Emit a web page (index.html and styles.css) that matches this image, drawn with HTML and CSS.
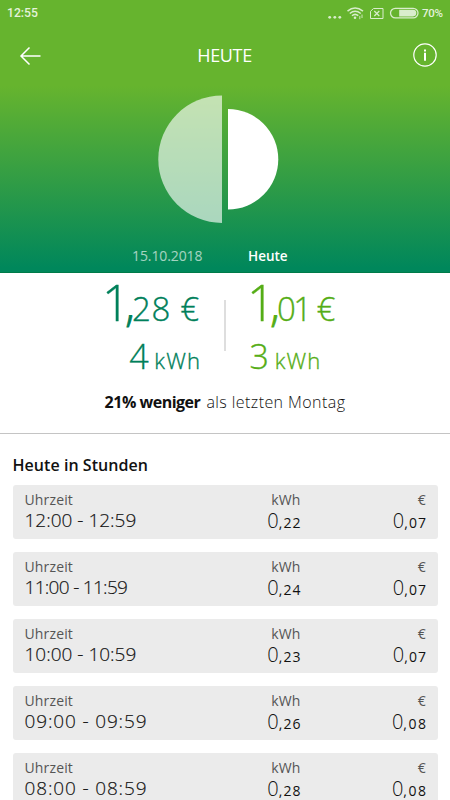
FILE: index.html
```html
<!DOCTYPE html>
<html lang="de">
<head>
<meta charset="utf-8">
<title>Heute</title>
<link rel="stylesheet" href="styles.css">
</head>
<body>
<header class="hero">
  <div class="status">
    <span>12:55</span>
    <svg class="status-icons" width="90" height="20" viewBox="0 0 90 20" fill="none" stroke="#d9edcc">
      <g fill="#d9edcc" stroke="none"><circle cx="2.7" cy="13.3" r="1.4"/><circle cx="7.8" cy="13.3" r="1.4"/><circle cx="12.8" cy="13.3" r="1.4"/><circle cx="28" cy="13.800" r="1.300"/></g>
      <path stroke-width="1.500" d="M20.500 7.200Q28 1 36 7.200M22.800 9.500Q28 5 33.800 9.500M25 11.700Q28 9 31.300 11.700"/>
      <path stroke-width=".9" d="M32.800 12v3.200M35 10.500v3.500"/>
      <path d="M46.500 4.500h9.500v10H43.500V7.300z"/><path stroke-width="1.200" d="m47.300 7 5 5m0-5-5 5"/>
      <rect x="63.500" y="4.300" width="27.500" height="9.600" rx="4.800" stroke-width="1.300"/>
      <path fill="#d9edcc" stroke="none" d="M72.200 5.800h13.800a3.300 3.300 0 0 1 0 6.600H72.200z"/>
    </svg>
    <span class="percent">70%</span>
  </div>
  <nav class="nav">
    <svg width="24" height="24" viewBox="0 0 24 24" fill="none" stroke="#fff" stroke-width="1.500"><path d="M22.500 13H3M11.500 4.500 3 13l8.500 8.500"/></svg>
    <h1>HEUTE</h1>
    <svg width="24" height="24" viewBox="0 0 24 24" fill="none" stroke="#fff"><circle cx="12" cy="12" r="11.200" stroke-width="1.200"/><path stroke-width="2" d="M12 9.800v8M12 6.500v2"/></svg>
  </nav>
  <svg class="chart" width="122" height="130" viewBox="0 0 122 130" fill="#fff"><path fill-opacity=".63" d="M64 1.500a63.700 63.700 0 0 0 0 127.400z"/><path d="M70 15a50.300 50.300 0 0 1 0 100.600z"/></svg>
  <div class="days"><span class="day-past">15.10.2018</span><span class="day-now">Heute</span></div>
</header>
<section class="summary">
  <div class="totals">
    <div class="total past">
      <p class="cost"><b>1</b><b class="comma">,</b><span>28</span><i>€</i></p>
      <p class="energy"><b>4</b> <span>kWh</span></p>
    </div>
    <div class="divider"></div>
    <div class="total now">
      <p class="cost"><b>1</b><b class="comma">,</b><span class="tight">01</span><i>€</i></p>
      <p class="energy"><b>3</b> <span>kWh</span></p>
    </div>
  </div>
  <p class="compare"><strong>21% weniger</strong> <span>als letzten Montag</span></p>
</section>
<main class="hours">
  <h2>Heute in Stunden</h2>
  <article class="card"><div><small>Uhrzeit</small><p class="time">12:00 - 12:59</p></div><div><small>kWh</small><p>0<span>,22</span></p></div><div><small>€</small><p>0<span>,07</span></p></div></article>
  <article class="card"><div><small>Uhrzeit</small><p class="time narrow">11:00 - 11:59</p></div><div><small>kWh</small><p>0<span>,24</span></p></div><div><small>€</small><p>0<span>,07</span></p></div></article>
  <article class="card"><div><small>Uhrzeit</small><p class="time">10:00 - 10:59</p></div><div><small>kWh</small><p>0<span>,23</span></p></div><div><small>€</small><p>0<span>,07</span></p></div></article>
  <article class="card"><div><small>Uhrzeit</small><p class="time wide">09:00 - 09:59</p></div><div><small>kWh</small><p>0<span>,26</span></p></div><div><small>€</small><p>0<span class="broad">,08</span></p></div></article>
  <article class="card"><div><small>Uhrzeit</small><p class="time wide">08:00 - 08:59</p></div><div><small>kWh</small><p>0<span>,28</span></p></div><div><small>€</small><p>0<span class="broad">,08</span></p></div></article>
</main>
</body>
</html>
```
FILE: styles.css
```css
* { box-sizing: border-box; }
body { margin: 0; width: 450px; height: 800px; overflow: hidden; background: #fff; color: #111; font-family: "Open Sans", "Noto Sans", sans-serif; }
h1, h2, p { margin: 0; font-weight: 300; }
svg { display: block; flex: none; }
.hero { height: 273px; background: linear-gradient(#66b42e 0, #66b42e 86px, #00875b 268px); border-bottom: 1px solid #007b49; color: #fff; }
.status { display: flex; height: 26px; padding: 0 6px 0 7px; align-items: center; font: 500 12.2px/26px Roboto, sans-serif; color: #e4f2da; }
.status-icons { margin: 1px 0 0 auto; overflow: visible; }
.percent { width: 22px; margin-left: 5px; font-size: 11.5px; letter-spacing: -.3px; }
.nav { display: flex; height: 58px; padding: 0 13px 0 18px; align-items: center; justify-content: space-between; }
.nav h1 { margin-right: 6px; font-size: 18px; font-weight: 400; letter-spacing: -.35px; line-height: 58px; }
.chart { margin: 10px 0 0 158px; }
.days { display: flex; margin-top: 20px; height: 24px; line-height: 24px; font-size: 14px; }
.day-past { width: 116px; margin-left: 132px; opacity: .63; letter-spacing: -.1px; line-height: 23px; }
.day-now { font-size: 13.5px; font-weight: 600; line-height: 25px; }
.summary { height: 161px; border-bottom: 1px solid #c4c4c4; }
.totals { display: flex; height: 114px; }
.total { width: 224px; }
.past { color: #00805a; text-align: right; padding-right: 24px; }
.now { color: #55ad16; padding-left: 24px; }
.divider { width: 1.5px; height: 51px; margin-top: 27px; background: #dedede; }
.total p { white-space: nowrap; -webkit-text-stroke: .35px currentColor; }
.total b, .total i { font-weight: 300; font-style: normal; }
.total i { margin-left: 9px; }
.cost { height: 60px; line-height: 59px; font-size: 33px; }
.past .cost { margin-right: 1px; }
.cost span { letter-spacing: .8px; }
.cost .tight { letter-spacing: -2.5px; }
.now .cost i { margin-left: 7px; }
.cost b { font-size: 49px; letter-spacing: -5px; margin-left: -2.5px; }
.cost .comma { margin-left: 0; font-size: 46px; letter-spacing: -3px; font-weight: 300; -webkit-text-stroke: .8px currentColor; }
.energy { height: 50px; line-height: 47px; font-size: 22px; }
.energy b { font-size: 34px; }
.energy span { letter-spacing: 1.2px; margin-right: -1.2px; }
.compare { text-align: center; font-size: 16px; line-height: 30px; }
.compare strong { font-weight: 700; letter-spacing: -.5px; }
.compare span { margin-left: 2px; letter-spacing: .42px; }
.hours { padding: 15.5px 12px 0 12.5px; }
.hours h2 { height: 35px; line-height: 31px; font-size: 16px; font-weight: 600; letter-spacing: .05px; }
.card { display: grid; grid-template-columns: 188px 88px 1fr; height: 54px; margin-bottom: 13px; padding: 5px 12px 0; border-radius: 3px; background: #ebebeb; }
.card div + div { text-align: right; }
.card small { display: block; height: 20px; line-height: 20px; font-size: 14px; letter-spacing: .15px; color: #555; }
.card p { height: 21px; line-height: 21px; font-size: 20px; white-space: nowrap; }
.card .time { font-size: 19px; -webkit-text-stroke: .15px currentColor; }
.card .narrow { letter-spacing: -.7px; }
.card .wide { letter-spacing: .85px; }
.card p span { font-size: 14px; font-weight: 400; letter-spacing: 1.1px; margin-right: -1.1px; }
.card p .broad { letter-spacing: 1.5px; margin-right: -1.5px; }
```
